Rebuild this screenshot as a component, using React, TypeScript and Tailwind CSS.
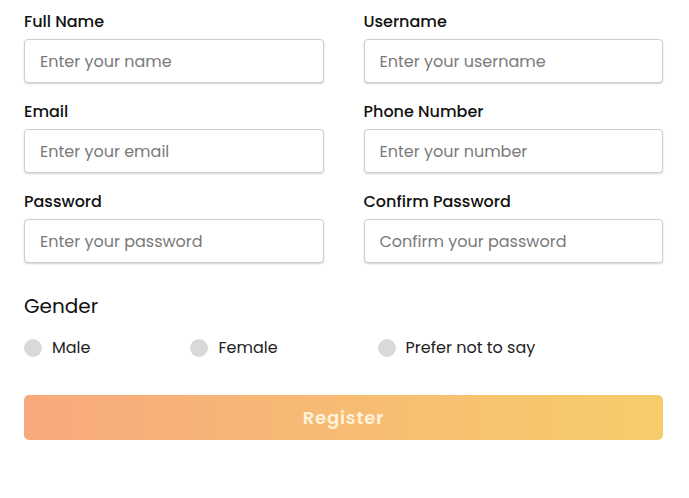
import React from "react";

const font = { fontFamily: '"Poppins", "Open Sans", "Noto Sans", sans-serif' };

function Field({ label, placeholder, type = "text" }: { label: string; placeholder: string; type?: string }) {
  return (
    <div className="flex flex-col">
      <label className="text-[16px] leading-[22px] font-medium text-[#111] mb-[6px]">{label}</label>
      <input
        type={type}
        placeholder={placeholder}
        className="h-[44px] w-full rounded-[4px] border border-[#cfcfcf] bg-white px-[15px] text-[16px] text-[#333] placeholder:text-[#7a7a7a] shadow-[0_1px_2px_rgba(0,0,0,0.18)] outline-none"
      />
    </div>
  );
}

function Radio({ label }: { label: string }) {
  return (
    <label className="flex items-center gap-[10px] text-[16px] leading-[24px] text-[#222]">
      <span className="block h-[18px] w-[18px] rounded-full bg-[#d9d9d9]" />
      {label}
    </label>
  );
}

export default function App() {
  return (
    <div className="min-h-[498px] w-full bg-white pl-6 pr-[26px] pt-[11px]" style={font}>
      <div className="grid grid-cols-2 gap-x-10 gap-y-[18px]">
        <Field label="Full Name" placeholder="Enter your name" />
        <Field label="Username" placeholder="Enter your username" />
        <Field label="Email" placeholder="Enter your email" />
        <Field label="Phone Number" placeholder="Enter your number" />
        <Field label="Password" placeholder="Enter your password" type="password" />
        <Field label="Confirm Password" placeholder="Confirm your password" type="password" />
      </div>
      <div className="mt-[29px] text-[20px] leading-[28px] text-[#111]">Gender</div>
      <div className="mt-[16px] flex items-center gap-[100px]">
        <Radio label="Male" />
        <Radio label="Female" />
        <Radio label="Prefer not to say" />
      </div>
      <button className="mt-[35px] h-[45px] w-full rounded-[5px] bg-gradient-to-r from-[#f8a97c] to-[#f6cd6a] text-[18px] font-semibold tracking-[0.8px] text-[#fff3dc]">
        Register
      </button>
    </div>
  );
}
